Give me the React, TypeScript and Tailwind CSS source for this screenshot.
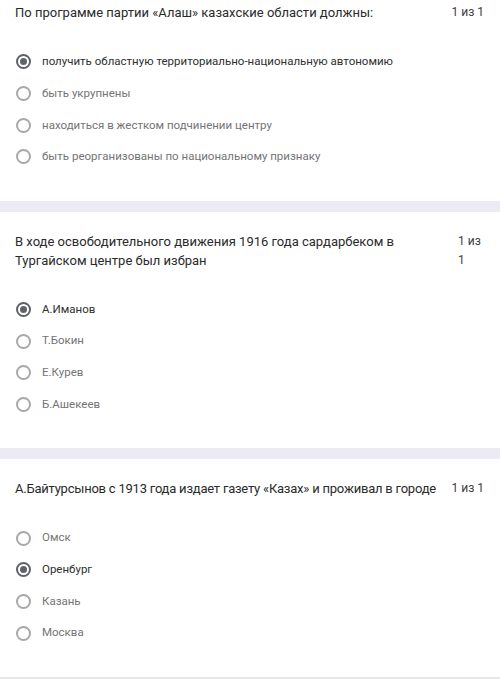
import React from "react";

interface Question {
  id: string;
  text: string;
  score: string;
  scoreClass: string;
  textClass: string;
  options: string[];
  selected: number;
  topPad: string;
}

const QUESTIONS: Question[] = [
  {
    id: "q1",
    text: "По программе партии «Алаш» казахские области должны:",
    score: "1 из 1",
    scoreClass: "",
    textClass: "",
    options: [
      "получить областную территориально-национальную автономию",
      "быть укрупнены",
      "находиться в жестком подчинении центру",
      "быть реорганизованы по национальному признаку",
    ],
    selected: 0,
    topPad: "pt-[3px]",
  },
  {
    id: "q2",
    text: "В ходе освободительного движения 1916 года сардарбеком в Тургайском центре был избран",
    score: "1 из 1",
    scoreClass: "w-[26px]",
    textClass: "",
    options: ["А.Иманов", "Т.Бокин", "Е.Курев", "Б.Ашекеев"],
    selected: 0,
    topPad: "pt-[20px]",
  },
  {
    id: "q3",
    text: "А.Байтурсынов с 1913 года издает газету «Казах» и проживал в городе",
    score: "1 из 1",
    scoreClass: "",
    textClass: "whitespace-nowrap tracking-[-0.22px]",
    options: ["Омск", "Оренбург", "Казань", "Москва"],
    selected: 1,
    topPad: "pt-[20px]",
  },
];

function Radio({ checked }: { checked: boolean }) {
  return (
    <span
      className={`w-[15px] h-[15px] rounded-full border-2 flex items-center justify-center shrink-0 ${
        checked ? "border-[#5f6368]" : "border-[#a8a8a8]"
      }`}
    >
      {checked && <span className="w-[7px] h-[7px] rounded-full bg-[#5f6368]" />}
    </span>
  );
}

export default function App() {
  return (
    <div
      className="w-[500px] h-[679px] overflow-hidden bg-white"
      style={{ fontFamily: "Roboto, 'Noto Sans', sans-serif" }}
    >
      {QUESTIONS.map((q, qi) => (
        <div key={q.id}>
          {qi > 0 && <div className="h-[11px] bg-[#ebeaf5]" />}
          <div className={`${q.topPad} pb-[28px] pl-[15px] pr-[16px]`}>
            <div className="flex items-start">
              <p className={`flex-1 min-w-0 text-[13px] leading-[19px] text-[#2a2a2a] ${q.textClass}`}>{q.text}</p>
              <span className={`ml-3 shrink-0 text-[12px] leading-[19px] text-[#3c4043] ${q.scoreClass}`}>
                {q.score}
              </span>
            </div>
            <div className="mt-[24px] flex flex-col">
              {q.options.map((opt, i) => (
                <div key={opt} className="h-[31.67px] flex items-center gap-[11px] pl-[1px]">
                  <Radio checked={i === q.selected} />
                  <span
                    className={`text-[11.5px] ${
                      i === q.selected ? "text-[#2f2f2f]" : "text-[#747474]"
                    }`}
                  >
                    {opt}
                  </span>
                </div>
              ))}
            </div>
          </div>
        </div>
      ))}
      <div className="h-[2px] bg-[#e6e6e6]" />
    </div>
  );
}
